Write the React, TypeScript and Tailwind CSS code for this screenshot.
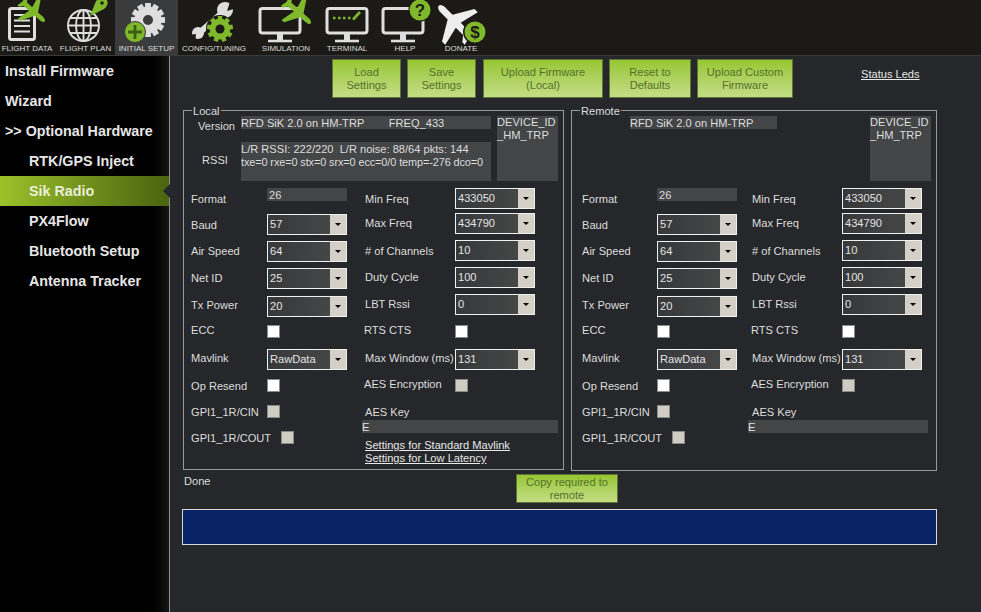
import React from "react";

const PLANE = "M0,-20 C2,-20 3,-17 3,-14 L3,-6 L20,4 L20,8 L3,4 L3,13 L8,17 L8,20 L0,18 L-8,20 L-8,17 L-3,13 L-3,4 L-20,8 L-20,4 L-3,-6 L-3,-14 C-3,-17 -2,-20 0,-20Z";
const GREEN = "#7fb82a";
const W = "#dedede";
const HEADER = "#1b1a17";

function Plane({ x, y, r, s, fill }: { x: number; y: number; r: number; s: number; fill: string }) {
  return <path d={PLANE} fill={fill} transform={`translate(${x} ${y}) rotate(${r}) scale(${s})`} />;
}

function Gear({ x, y, r, hole, fill, bg, teeth }: { x: number; y: number; r: number; hole: number; fill: string; bg: string; teeth: number }) {
  const t = [];
  for (let i = 0; i < teeth; i++) {
    t.push(<rect key={i} x={x - r * 0.17} y={y - r} width={r * 0.34} height={r * 0.4} fill={fill} transform={`rotate(${(360 / teeth) * i} ${x} ${y})`} />);
  }
  return (
    <g>
      {t}
      <circle cx={x} cy={y} r={r * 0.8} fill={fill} />
      <circle cx={x} cy={y} r={hole} fill={bg} />
    </g>
  );
}

function Monitor({ x }: { x: number }) {
  return (
    <g fill="none" stroke={W}>
      <rect x={x} y={8.5} width={40} height={24.5} rx={2.5} strokeWidth={3} />
      <path d={`M${x + 20} 33 V40`} strokeWidth={6} />
      <path d={`M${x + 8} 41 H${x + 32}`} strokeWidth={2.6} />
    </g>
  );
}

const tabs = [
  {
    label: "FLIGHT DATA", w: "w-[56px]", width: 56, lc: "ml-[-2px]",
    icon: (
      <g>
        <rect x={9.5} y={8.5} width={25} height={31} rx={2} fill="none" stroke={W} strokeWidth={3} />
        <path d="M14 15H30M14 20.5H30M14 26H30M14 31.5H30" stroke={W} strokeWidth={2.2} />
        <Plane x={33} y={11} r={132} s={0.78} fill={GREEN} />
      </g>
    ),
  },
  {
    label: "FLIGHT PLAN", w: "w-[59px]", width: 59, lc: "",
    icon: (
      <g>
        <g fill="none" stroke={W} strokeWidth={1.9}>
          <circle cx={27.5} cy={25.5} r={15.5} />
          <ellipse cx={27.5} cy={25.5} rx={7.5} ry={15.5} />
          <path d="M27.5 10V41M12 25.5H43M14 18H41M14 33H41" />
        </g>
        <path d="M34 16 L40 1 Q46 -4 51 0 Q53 5 48 9 Z" fill={GREEN} />
        <circle cx={46} cy={3} r={1.8} fill={HEADER} />
      </g>
    ),
  },
  {
    label: "INITIAL SETUP", w: "w-[63px]", width: 63, lc: "",
    active: true,
    icon: (
      <g>
        <Gear x={33} y={20} r={17} hole={5} fill={W} bg="#3a3b3c" teeth={12} />
        <circle cx={20} cy={32} r={10.5} fill={GREEN} stroke="#3a3b3c" strokeWidth={1} />
        <path d="M20 25V39M13 32H27" stroke="#3f5c10" strokeWidth={2.8} />
      </g>
    ),
  },
  {
    label: "CONFIG/TUNING", w: "w-[72px]", width: 72, lc: "",
    icon: (
      <g>
        <path d="M20 34 L45 12" stroke={W} strokeWidth={6} strokeLinecap="round" />
        <circle cx={47} cy={10} r={8} fill={W} />
        <path d="M49 11 L53 -1 L58 3 L59 8 Z" fill={HEADER} />
        <circle cx={20} cy={33} r={6} fill={W} />
        <path d="M18 34 L11 35 L17 43 Z" fill={HEADER} />
        <circle cx={42} cy={29} r={14} fill={HEADER} />
        <Gear x={42} y={29} r={13} hole={4.5} fill={GREEN} bg={HEADER} teeth={9} />
      </g>
    ),
  },
  {
    label: "SIMULATION", w: "w-[72px]", width: 72, lc: "",
    icon: (
      <g>
        <Monitor x={10} />
        <Plane x={48} y={12} r={132} s={0.85} fill={GREEN} />
      </g>
    ),
  },
  {
    label: "TERMINAL", w: "w-[50px]", width: 50, lc: "",
    icon: (
      <g>
        <Monitor x={5} />
        <path d="M11 18H13.5M16 18H18.5M21 18H23.5M26 18H28.5" stroke={GREEN} strokeWidth={2.4} />
        <path d="M31 19.5L38 12" stroke={GREEN} strokeWidth={2.6} />
      </g>
    ),
  },
  {
    label: "HELP", w: "w-[66px]", width: 66, lc: "",
    icon: (
      <g>
        <Monitor x={11} />
        <circle cx={48} cy={10} r={11.5} fill={HEADER} />
        <circle cx={48} cy={10} r={10.5} fill={GREEN} />
        <text x={48} y={16} textAnchor="middle" fontSize={17} fontWeight={700} fill={HEADER} fontFamily="'Liberation Sans', sans-serif">?</text>
      </g>
    ),
  },
  {
    label: "DONATE", w: "w-[46px]", width: 46, lc: "",
    icon: (
      <g>
        <Plane x={17} y={22} r={-45} s={1.15} fill="#eeeeee" />
        <circle cx={37} cy={32} r={12} fill={HEADER} />
        <circle cx={37} cy={32} r={10.5} fill={GREEN} />
        <text x={37} y={38} textAnchor="middle" fontSize={17} fontWeight={700} fill={HEADER} fontFamily="'Liberation Sans', sans-serif">$</text>
      </g>
    ),
  },
];

function Tab({ t }: { t: (typeof tabs)[number] }) {
  return (
    <div className={`${t.w} h-[55px] shrink-0 flex flex-col items-center ${t.active ? "bg-[#3a3b3c]" : ""}`}>
      <svg width={t.width} height={44} viewBox={`0 0 ${t.width} 44`} className="block shrink-0 overflow-visible">
        {t.icon}
      </svg>
      <span className={`text-[8px] leading-[9px] text-[#dcdcdc] whitespace-nowrap ${t.lc}`}>{t.label}</span>
    </div>
  );
}

const sideItems = [
  { label: "Install Firmware", cls: "pl-[5px]" },
  { label: "Wizard", cls: "pl-[5px]" },
  { label: ">> Optional Hardware", cls: "pl-[5px]" },
  { label: "RTK/GPS Inject", cls: "pl-[29px]" },
  { label: "Sik Radio", cls: "pl-[29px]", active: true },
  { label: "PX4Flow", cls: "pl-[29px]" },
  { label: "Bluetooth Setup", cls: "pl-[29px]" },
  { label: "Antenna Tracker", cls: "pl-[29px]" },
];

function Sidebar() {
  return (
    <div className="w-[170px] shrink-0 bg-gradient-to-r from-black from-[85%] to-[#161616] border-r border-[#8f8f8f]">
      {sideItems.map((s) => (
        <div
          key={s.label}
          className={`relative h-[30px] pt-[2px] flex items-center text-[14.3px] font-bold whitespace-nowrap ${s.cls} ${
            s.active ? "bg-gradient-to-r from-[#9cc22a] to-[#4a6410] text-[#e8eed8]" : "text-[#e6e6e6]"
          }`}
        >
          {s.label}
          {s.active && (
            <span className="absolute right-[-1px] top-[8px] w-0 h-0 border-y-[7px] border-y-transparent border-r-[7px] border-r-[#25272a]" />
          )}
        </div>
      ))}
    </div>
  );
}

function GreenBtn({ w, children, cls }: { w: string; children: React.ReactNode; cls?: string }) {
  return (
    <div
      className={`${w} ${cls ?? "h-[39px]"} shrink-0 flex items-center justify-center text-center text-[11.1px] leading-[13px] text-[#56712a] bg-gradient-to-b from-[#97c62f] to-[#c4dd84] border border-[#5e7436] px-1`}
    >
      <span>{children}</span>
    </div>
  );
}

function Combo({ value }: { value: string }) {
  return (
    <div className="w-[80px] h-[21px] shrink-0 flex border border-[#f0f0f0] bg-gradient-to-r from-[#36383a] to-[#4a4a4a]">
      <span className="flex-1 pl-[2px] text-[11.1px] leading-[18px] text-[#e4e4e4]">{value}</span>
      <span className="w-[16px] bg-[#d4d0c8] flex items-center justify-center">
        <span className="w-0 h-0 border-x-[3px] border-x-transparent border-t-[3px] border-t-black" />
      </span>
    </div>
  );
}

function Check({ off }: { off?: boolean }) {
  return <div className={`w-[13px] h-[13px] shrink-0 border border-[#8a8a8a] ${off ? "bg-[#cfccc4]" : "bg-white"}`} />;
}

function Lbl({ children, cls }: { children: React.ReactNode; cls: string }) {
  return <span className={`block text-[11.1px] leading-[16px] text-[#dedede] whitespace-nowrap ${cls}`}>{children}</span>;
}

function Row({ h, children }: { h: string; children: React.ReactNode }) {
  return <div className={`${h} flex items-start shrink-0`}>{children}</div>;
}

function ColOne({ lw, boxX }: { lw: string; boxX: string }) {
  return (
    <div className={`flex flex-col ${boxX}`}>
      <Row h="h-[26px]">
        <Lbl cls={`${lw} mt-[3px]`}>Format</Lbl>
        <div className="w-[80px] h-[13px] bg-[#434547] text-[11.1px] leading-[14px] text-[#dedede] pl-[2px]">26</div>
      </Row>
      <Row h="h-[27px]">
        <Lbl cls={`${lw} mt-[3px]`}>Baud</Lbl>
        <Combo value="57" />
      </Row>
      <Row h="h-[27px]">
        <Lbl cls={`${lw} mt-[2px]`}>Air Speed</Lbl>
        <Combo value="64" />
      </Row>
      <Row h="h-[28px]">
        <Lbl cls={`${lw} mt-[2px]`}>Net ID</Lbl>
        <Combo value="25" />
      </Row>
      <Row h="h-[29px]">
        <Lbl cls={`${lw} mt-[1px]`}>Tx Power</Lbl>
        <Combo value="20" />
      </Row>
      <Row h="h-[24px]">
        <Lbl cls={`${lw} mt-[-3px]`}>ECC</Lbl>
        <Check />
      </Row>
      <Row h="h-[30px]">
        <Lbl cls={`${lw} mt-[1px]`}>Mavlink</Lbl>
        <Combo value="RawData" />
      </Row>
      <Row h="h-[26px]">
        <Lbl cls={`${lw} mt-[-1px]`}>Op Resend</Lbl>
        <Check />
      </Row>
      <Row h="h-[26px]">
        <Lbl cls={`${lw} mt-[-1px]`}>GPI1_1R/CIN</Lbl>
        <Check off />
      </Row>
      <Row h="h-[14px]">
        <Lbl cls="w-[90px] mt-[-1px]">GPI1_1R/COUT</Lbl>
        <Check off />
      </Row>
    </div>
  );
}

function ColTwo({ keyCls, links }: { keyCls: string; links?: boolean }) {
  return (
    <div className="flex flex-col">
      <Row h="h-[25px]">
        <Lbl cls="w-[90px] mt-[3px]">Min Freq</Lbl>
        <Combo value="433050" />
      </Row>
      <Row h="h-[27px]">
        <Lbl cls="w-[90px] mt-[2px]">Max Freq</Lbl>
        <Combo value="434790" />
      </Row>
      <Row h="h-[27px]">
        <Lbl cls="w-[90px] mt-[3px]"># of Channels</Lbl>
        <Combo value="10" />
      </Row>
      <Row h="h-[27px]">
        <Lbl cls="w-[90px] mt-[2px]">Duty Cycle</Lbl>
        <Combo value="100" />
      </Row>
      <Row h="h-[31px]">
        <Lbl cls="w-[90px] mt-[2px]">LBT Rssi</Lbl>
        <Combo value="0" />
      </Row>
      <Row h="h-[24px]">
        <Lbl cls="w-[90px] mt-[-3px] ml-[-1px] mr-[1px]">RTS CTS</Lbl>
        <Check />
      </Row>
      <Row h="h-[30px]">
        <Lbl cls="w-[90px] mt-[1px]">Max Window (ms)</Lbl>
        <Combo value="131" />
      </Row>
      <Row h="h-[26px]">
        <Lbl cls="w-[90px] mt-[-3px] ml-[-1px] mr-[1px]">AES Encryption</Lbl>
        <Check off />
      </Row>
      <Row h="h-[15px]">
        <Lbl cls="w-[90px] mt-[-1px]">AES Key</Lbl>
      </Row>
      <div className={`${keyCls} h-[13px] bg-[#434547] text-[11.1px] leading-[14px] text-[#e4e4e4] shrink-0`}>E</div>
      {links && (
        <div className="mt-[6px]">
          <div className="h-[13px] text-[11.1px] leading-[13px] text-[#e8e8e8] underline whitespace-nowrap">Settings for Standard Mavlink</div>
          <div className="h-[11px] mt-[2px] overflow-hidden">
            <div className="mt-[-2px] text-[11.1px] leading-[13px] text-[#e8e8e8] underline whitespace-nowrap">Settings for Low Latency</div>
          </div>
        </div>
      )}
    </div>
  );
}

function DeviceBox({ cls }: { cls: string }) {
  return (
    <div className={`${cls} w-[61px] h-[65px] shrink-0 bg-[#434547] text-[11.1px] leading-[13px] text-[#dedede] whitespace-nowrap`}>
      DEVICE_ID
      <br />
      _HM_TRP
    </div>
  );
}

function LocalPanel() {
  return (
    <div className="relative w-[381px] h-[360px] shrink-0 border border-[#9a9a9a] pt-[5px]">
      <span className="absolute left-[8px] top-[-7px] bg-[#25272a] px-[1px] text-[11.1px] leading-[14px] text-[#dedede]">Local</span>
      <div className="flex pl-[14px] h-[26px]">
        <Lbl cls="w-[43px] mt-[2px]">Version</Lbl>
        <div className="w-[250px] h-[13px] shrink-0 bg-[#434547] text-[11.1px] leading-[14px] text-[#dedede] whitespace-pre">RFD SiK 2.0 on HM-TRP        FREQ_433</div>
        <DeviceBox cls="ml-[6px]" />
      </div>
      <div className="flex pl-[18px] h-[46px]">
        <Lbl cls="w-[39px] mt-[10px]">RSSI</Lbl>
        <div className="w-[250px] h-[39px] pt-[1px] bg-[#434547] text-[11.1px] leading-[13px] text-[#dedede] whitespace-pre overflow-hidden">
          L/R RSSI: 222/220  L/R noise: 88/64 pkts: 144
          <div className="text-[10.9px] tracking-[-0.1px]">txe=0 rxe=0 stx=0 srx=0 ecc=0/0 temp=-276 dco=0</div>
        </div>
      </div>
      <div className="flex">
        <ColOne lw="w-[76px]" boxX="pl-[7px] w-[181px]" />
        <ColTwo keyCls="w-[196px] ml-[-3px]" links />
      </div>
    </div>
  );
}

function RemotePanel() {
  return (
    <div className="relative w-[366px] h-[361px] shrink-0 border border-[#9a9a9a] pt-[5px]">
      <span className="absolute left-[8px] top-[-7px] bg-[#25272a] px-[1px] text-[11.1px] leading-[14px] text-[#dedede]">Remote</span>
      <div className="flex pl-[58px] h-[72px]">
        <div className="w-[147px] h-[13px] shrink-0 bg-[#434547] text-[11.1px] leading-[14px] text-[#dedede] whitespace-pre">RFD SiK 2.0 on HM-TRP</div>
        <DeviceBox cls="ml-[93px]" />
      </div>
      <div className="flex">
        <ColOne lw="w-[75px]" boxX="pl-[10px] w-[180px]" />
        <ColTwo keyCls="w-[180px] ml-[-4px]" />
      </div>
    </div>
  );
}

export default function App() {
  return (
    <div className="w-[981px] h-[612px] overflow-hidden bg-[#25272a] flex flex-col font-['Liberation_Sans',Arial,sans-serif]">
      <div className="h-[55px] shrink-0 flex bg-[#1b1a17]">
        {tabs.map((t) => (
          <Tab key={t.label} t={t} />
        ))}
      </div>
      <div className="flex flex-1 min-h-0 border-t border-[#3a3a3a]">
        <Sidebar />
        <div className="flex-1 min-w-0 flex flex-col pt-[3px] pl-[12px]">
          <div className="flex items-start h-[51px] shrink-0 pl-[150px]">
            <GreenBtn w="w-[69px]">Load<br />Settings</GreenBtn>
            <GreenBtn w="w-[69px] ml-[6px]">Save<br />Settings</GreenBtn>
            <GreenBtn w="w-[120px] ml-[7px]">Upload Firmware<br />(Local)</GreenBtn>
            <GreenBtn w="w-[82px] ml-[6px]">Reset to<br />Defaults</GreenBtn>
            <GreenBtn w="w-[96px] ml-[6px]">Upload Custom<br />Firmware</GreenBtn>
            <span className="ml-[68px] mt-[8px] text-[11.1px] leading-[14px] text-[#e8e8e8] underline">Status Leds</span>
          </div>
          <div className="flex shrink-0 pl-[1px] gap-[7px]">
            <LocalPanel />
            <RemotePanel />
          </div>
          <div className="relative h-[33px] shrink-0 mt-[3px]">
            <span className="absolute left-[2px] top-0 text-[11.1px] leading-[14px] text-[#dedede]">Done</span>
            <div className="absolute left-[334px] top-0">
              <GreenBtn w="w-[102px]" cls="h-[29px]">Copy required to<br />remote</GreenBtn>
            </div>
          </div>
          <div className="w-[755px] h-[36px] shrink-0 bg-[#0a2266] border border-[#d8d8d8] mt-[2px]" />
        </div>
      </div>
    </div>
  );
}
